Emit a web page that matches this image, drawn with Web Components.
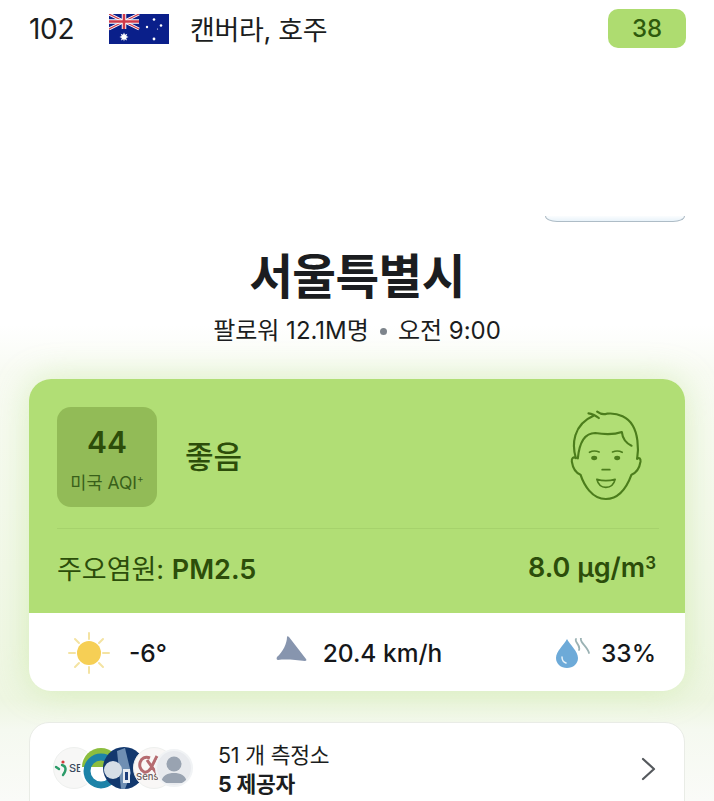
<!DOCTYPE html>
<html lang="ko">
<head>
<meta charset="utf-8">
<style>
    html, body { margin: 0; height: 801px; overflow: hidden; background: #fff; }
    body { font-family: Inter, "Noto Sans CJK KR", sans-serif; color: #1b1d20; }
</style>
</head>
<body>
<aq-page>
    <aq-rank-row rank="102" place="캔버라, 호주" value="38"></aq-rank-row>
    <aq-city-head city="서울특별시" followers="팔로워 12.1M명" time="오전 9:00"></aq-city-head>
    <aq-main-card></aq-main-card>
    <aq-provider-card></aq-provider-card>
</aq-page>

<script>
const AqPageTemplate = document.createElement('template');
AqPageTemplate.innerHTML = `
    <style>
        :host{
            display: flex;
            flex-direction: column;
            height: 801px;
            overflow: hidden;
            background: linear-gradient(180deg, #fff 0, #fff 325px, #f8fbf3 372px, #eef6e2 700px, #f5f9f0 730px, #fafbf8 801px);
        }
    </style>
    <slot></slot>
`;
class AqPage extends HTMLElement {
    constructor() {
        super();
        this.attachShadow({mode: 'open'}).appendChild(AqPageTemplate.content.cloneNode(true));
    }
}

const AqRankRowTemplate = document.createElement('template');
AqRankRowTemplate.innerHTML = `
    <style>
        :host{
            display: flex;
            align-items: center;
            flex: none;
            height: 57px;
            padding: 0 28px 0 29px;
        }
        #rank{ width: 80px; font-size: 28px; letter-spacing: -0.3px; }
        svg{ display: block; width: 60px; height: 30px; }
        #place{ flex: 1; margin-left: 21px; font-size: 27px; letter-spacing: -0.35px; }
        #badge{
            width: 78px;
            height: 39px;
            border-radius: 10px;
            background: #aedc70;
            color: #2e5a0c;
            font-size: 24px;
            font-weight: 500;
            display: flex;
            align-items: center;
            justify-content: center;
        }
    </style>
    <span id="rank"></span>
    <svg viewBox="0 0 60 30">
        <rect width="60" height="30" fill="#0a1f8a"/>
        <path d="M0 0L30 15M30 0L0 15" stroke="#fff" stroke-width="3"/>
        <path d="M0 0L30 15M30 0L0 15" stroke="#cf3a4a" stroke-width="1.200"/>
        <path d="M15 0V15M0 7.500H30" stroke="#fff" stroke-width="4.500"/>
        <path d="M15 0V15M0 7.500H30" stroke="#cf3a4a" stroke-width="2.600"/>
        <g fill="#fff">
            <path d="M15 18.500L16 20.800L18.300 19.800L17.300 22L19.500 23L17.200 24L18 26.400L15.700 25.300L15 27.500L14.300 25.300L12 26.400L12.800 24L10.500 23L12.700 22L11.700 19.800L14 20.800Z"/>
            <circle cx="45" cy="5.500" r="1.300"/>
            <circle cx="38" cy="13" r="1.200"/>
            <circle cx="52" cy="11.500" r="1.300"/>
            <circle cx="45" cy="25" r="1.400"/>
            <circle cx="48.500" cy="15" r=".6"/>
        </g>
    </svg>
    <span id="place"></span>
    <span id="badge"></span>
`;
class AqRankRow extends HTMLElement {
    constructor() {
        super();
        this.attachShadow({mode: 'open'}).appendChild(AqRankRowTemplate.content.cloneNode(true));
    }
    connectedCallback() {
        this.shadowRoot.getElementById('rank').textContent = this.getAttribute('rank');
        this.shadowRoot.getElementById('place').textContent = this.getAttribute('place');
        this.shadowRoot.getElementById('badge').textContent = this.getAttribute('value');
    }
}

const AqCityHeadTemplate = document.createElement('template');
AqCityHeadTemplate.innerHTML = `
    <style>
        :host{
            display: flex;
            flex-direction: column;
            align-items: center;
            flex: none;
            height: 322px;
            box-sizing: border-box;
            padding-top: 159px;
        }
        #sliver{
            align-self: flex-end;
            width: 140px;
            height: 6px;
            margin-right: 29px;
            box-sizing: border-box;
            border: 1px solid #aebcc6;
            border-top: 0;
            border-radius: 0 0 12px 12px / 0 0 6px 6px;
            background: linear-gradient(180deg, #fbfdfe, #e9f3fa);
        }
        h1{
            margin: 26px 0 0;
            font-size: 47.5px;
            line-height: 58px;
            font-weight: 700;
            letter-spacing: -0.6px;
        }
        p{
            margin: 11px 0 0;
            font-size: 24px;
            line-height: 28px;
            letter-spacing: 0;
            display: flex;
            align-items: center;
            gap: 11px;
        }
        i{ width: 7px; height: 7px; border-radius: 50%; background: #7d848b; }
    </style>
    <div id="sliver"></div>
    <h1 id="city"></h1>
    <p><span id="followers"></span><i></i><span id="time"></span></p>
`;
class AqCityHead extends HTMLElement {
    constructor() {
        super();
        this.attachShadow({mode: 'open'}).appendChild(AqCityHeadTemplate.content.cloneNode(true));
    }
    connectedCallback() {
        this.shadowRoot.getElementById('city').textContent = this.getAttribute('city');
        this.shadowRoot.getElementById('followers').textContent = this.getAttribute('followers');
        this.shadowRoot.getElementById('time').textContent = this.getAttribute('time');
    }
}

const AqMainCardTemplate = document.createElement('template');
AqMainCardTemplate.innerHTML = `
    <style>
        :host{
            display: block;
            margin: 0 29px;
            height: 312px;
            border-radius: 22px;
            overflow: hidden;
            background: #fff;
            box-shadow: 0 0 34px rgba(170, 220, 110, .38);
            flex: none;
        }
        #green{
            height: 234px;
            box-sizing: border-box;
            padding: 28px 26px 0 28px;
            background: #b1de75;
            color: #2c4d0a;
        }
        #top{
            display: flex;
            align-items: center;
            height: 122px;
            padding-bottom: 22px;
            box-sizing: border-box;
            border-bottom: 1px solid #a6d26c;
        }
        #aqi{
            width: 100px;
            height: 100px;
            border-radius: 14px;
            background: #92bb57;
            display: flex;
            flex-direction: column;
            align-items: center;
            flex: none;
        }
        #aqi b{ font-size: 30px; line-height: 36px; margin-top: 17px; font-weight: 600; }
        #aqi span{ font-size: 17.5px; line-height: 20px; margin-top: 13px; color: #39601a; }
        #aqi sup{ font-size: 10px; line-height: 0; }
        #level{ flex: 1; margin-left: 28px; margin-top: -4px; font-size: 31px; font-weight: 500; }
        svg{ display: block; }
        #face{ width: 72px; height: 92px; margin: -3px 17px 0 0; }
        #pollutant{
            display: flex;
            justify-content: space-between;
            align-items: center;
            height: 76px;
            padding-right: 3px;
            font-size: 27px;
        }
        #pollutant b{ font-weight: 600; }
        #pollutant > span:last-child{ font-weight: 600; }
        #pollutant sup{ font-size: 17px; line-height: 0; vertical-align: 8px; }
        #weather{
            height: 78px;
            box-sizing: border-box;
            padding: 2px 29px 0 39px;
            display: flex;
            align-items: center;
            justify-content: space-between;
            font-size: 24.5px;
            font-weight: 500;
            color: #15171a;
        }
        .item{ display: flex; align-items: center; }
    </style>
    <div id="green">
        <div id="top">
            <div id="aqi"><b>44</b><span>미국 AQI<sup>+</sup></span></div>
            <div id="level">좋음</div>
            <svg id="face" viewBox="95 58 215 276" fill="none" stroke="#4c7d1c" stroke-width="6.500" stroke-linecap="round" stroke-linejoin="round">
                <path d="M112 205C100 165 103 105 165 78M150 71C160 72 172 78 181 85M176 66C184 72 192 76 205 72C240 68 270 85 283 108C296 130 302 170 296 207"/>
                <path d="M118 206C122 165 135 130 170 130C200 135 225 136 250 127C252 145 262 160 279 168"/>
                <path d="M112 205C105 200 98 206 100 216C103 235 112 250 126 255C136 285 160 328 202 328C245 328 268 285 279 255C292 250 303 235 306 216C307 206 302 203 296 207"/>
                <path d="M153 188C162 183 172 183 182 187M222 187C232 183 242 183 251 188M191 240H214" stroke-width="5"/>
                <path d="M175 269C192 274 212 274 230 269C226 285 215 293 202 293C189 293 179 285 175 269Z" stroke-width="5"/>
                <ellipse cx="167" cy="205" rx="9" ry="6.500" fill="#4c7d1c" stroke="none"/>
                <ellipse cx="236" cy="205" rx="9" ry="6.500" fill="#4c7d1c" stroke="none"/>
            </svg>
        </div>
        <div id="pollutant">
            <span>주오염원: <b>PM2.5</b></span>
            <span>8.0 µg/m<sup>3</sup></span>
        </div>
    </div>
    <div id="weather">
        <div class="item">
            <svg width="42" height="42" viewBox="0 0 42 42" style="margin-right:19px">
                <g stroke="#f4e3a2" stroke-width="2" stroke-linecap="round">
                    <path d="M21 1V7M21 35V41M1 21H7M35 21H41M7 7L11 11M31 31L35 35M35 7L31 11M11 31L7 35"/>
                </g>
                <circle cx="21" cy="21" r="12" fill="#f6cf55"/>
            </svg>
            <span>-6°</span>
        </div>
        <div class="item" style="margin-right:4px">
            <svg width="31" height="26" viewBox="0 0 31 26" style="margin-right:16px;margin-top:-8px">
                <path d="M11 1C11 7 7 16 1 21C0 23 1 24 2 24C10 23 20 24 29 25C30 25 31 24 30 23L13 1C12 0 11 0 11 1Z" fill="#8795ae"/>
            </svg>
            <span>20.4 km/h</span>
        </div>
        <div class="item">
            <svg width="36" height="31" viewBox="0 0 36 31" style="margin-right:10px">
                <path d="M12 1C9 7 1 13 1 20C1 26 6 30 12 30C18 30 23 26 23 20C23 13 15 7 12 1Z" fill="#6daad8"/>
                <path d="M7 19C7 22 8 24 11 25" fill="none" stroke="#e6f2fa" stroke-width="1.500" stroke-linecap="round"/>
                <g fill="none" stroke="#9bb2b4" stroke-width="1.800" stroke-linecap="round">
                    <path d="M21 1C19 4 26 7 24 12"/>
                    <path d="M26 0C24 4 32 8 34 15" />
                </g>
            </svg>
            <span>33%</span>
        </div>
    </div>
`;
class AqMainCard extends HTMLElement {
    constructor() {
        super();
        this.attachShadow({mode: 'open'}).appendChild(AqMainCardTemplate.content.cloneNode(true));
    }
}

const AqProviderCardTemplate = document.createElement('template');
AqProviderCardTemplate.innerHTML = `
    <style>
        :host{
            display: flex;
            align-items: flex-start;
            flex: none;
            box-sizing: border-box;
            margin: 31px 29px 0;
            height: 120px;
            padding: 24px 28px 0 23px;
            border: 1px solid #e9ece6;
            border-radius: 20px;
            background: #fff;
        }
        #stack{ display: flex; width: 165px; height: 44px; flex: none; }
        .logo{
            width: 42px;
            height: 42px;
            border-radius: 50%;
            border: 1px solid #eef0ee;
            box-sizing: border-box;
            background: #f7f7f6;
            overflow: hidden;
            display: flex;
            align-items: center;
            flex: none;
            position: relative;
        }
        .logo svg{ display: block; position: absolute; left: 0; top: 0; }
        .logo span{ position: relative; font-size: 11px; font-weight: 500; white-space: nowrap; }
        #text{ flex: 1; font-size: 21.5px; line-height: 28.5px; letter-spacing: -0.2px; margin-top: -6px; }
        #text b{ display: block; font-weight: 700; }
        #chevron{ margin-top: 10px; }
    </style>
    <div id="stack">
        <div class="logo" style="margin-right:-15px">
            <svg width="42" height="42" viewBox="0 0 42 42"><path d="M2 19L5 21M8 17C12 18 13 22 9 27" fill="none" stroke="#2d9c6a" stroke-width="2.400" stroke-linecap="round"/><circle cx="9" cy="14" r="1.600" fill="#d43b3b"/></svg>
            <span style="margin-left:15px;color:#3a4a60">SE</span>
        </div>
        <div class="logo" style="background:#fff;border:0;margin-right:-19px">
            <svg width="42" height="42" viewBox="0 0 42 42">
                <path d="M2 20A19 19 0 0 1 40 20Z" fill="#8cbd3f"/>
                <circle cx="21" cy="24" r="14" fill="none" stroke="#1d83a8" stroke-width="7"/>
                <path d="M33 30L42 30V42H33Z" fill="#fff"/>
            </svg>
        </div>
        <div class="logo" style="background:#12386e;border:0;margin-right:-12px">
            <svg width="42" height="42" viewBox="0 0 42 42">
                <path d="M14 4L22 1L28 26L22 42H18Z" fill="#6f8fb3"/>
                <circle cx="10" cy="23" r="9" fill="#d5dee6"/>
                <rect x="20" y="22" width="7" height="14" fill="#e7edf3"/>
                <rect x="22" y="25" width="3" height="8" fill="#1d3f7c"/>
            </svg>
        </div>
        <div class="logo" style="background:#f9f7f6;margin-right:-20px">
            <svg width="42" height="42" viewBox="0 0 42 42"><path d="M16 10C6 6 2 20 10 24C13 25 15 23 17 20L23 8M13 12L23 26" fill="none" stroke="#b56b70" stroke-width="3"/></svg>
            <span style="margin:16px 0 0 2px;font-size:9.5px;color:#6a5c5c">Sens</span>
        </div>
        <div class="logo" style="width:38px;height:38px;background:#e8eaee;border:2px solid #f1f3f5;margin-top:2px">
            <svg width="34" height="34" viewBox="0 0 34 34">
                <circle cx="17" cy="13" r="7.500" fill="#99a3b1"/>
                <path d="M4 32C5 24 11 22 17 22C23 22 29 24 30 32Z" fill="#99a3b1"/>
            </svg>
        </div>
    </div>
    <div id="text">51 개 측정소<b>5 제공자</b></div>
    <svg id="chevron" width="16" height="24" viewBox="0 0 16 24" fill="none" stroke="#55595d" stroke-width="2.200" stroke-linecap="round" stroke-linejoin="round"><path d="M3 2L14 12L3 22"/></svg>
`;
class AqProviderCard extends HTMLElement {
    constructor() {
        super();
        this.attachShadow({mode: 'open'}).appendChild(AqProviderCardTemplate.content.cloneNode(true));
    }
}

window.customElements.define('aq-page', AqPage);
window.customElements.define('aq-rank-row', AqRankRow);
window.customElements.define('aq-city-head', AqCityHead);
window.customElements.define('aq-main-card', AqMainCard);
window.customElements.define('aq-provider-card', AqProviderCard);
</script>
</body>
</html>
